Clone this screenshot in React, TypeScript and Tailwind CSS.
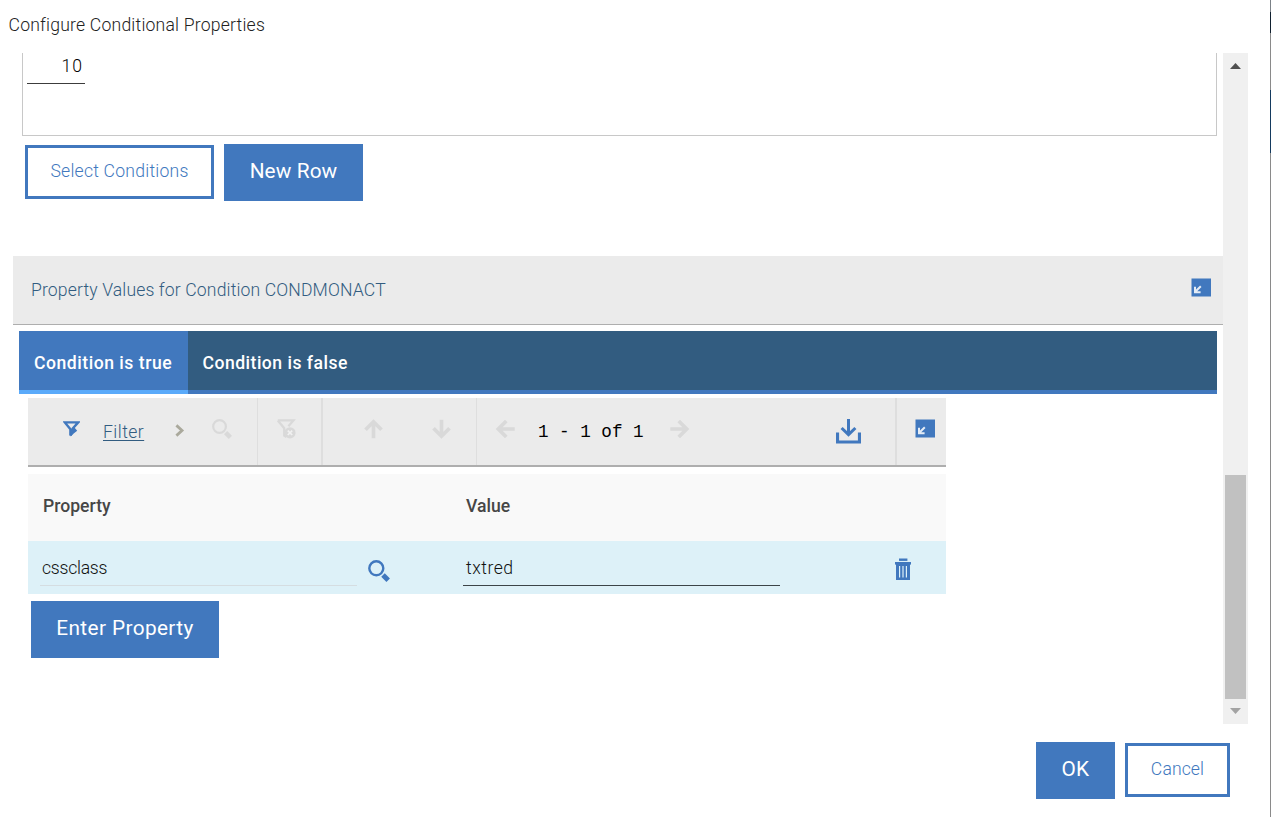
import React from "react";

type IconProps = { className?: string };

const FilterIcon = ({ className }: IconProps) => (
  <svg className={className} width="17" height="17" viewBox="0 0 17 17" fill="none">
    <path d="M1.8 1.4H15.2L9.8 7.4V10L7.4 14.5V8.2Z" stroke="#4178be" strokeWidth="2.4" />
    <path d="M11.5 6.6L14.2 9.8L11 12.2L7.6 15.6V10Z" fill="#4178be" />
  </svg>
);

const ClearFilterIcon = ({ className }: IconProps) => (
  <svg className={className} width="20" height="20" viewBox="0 0 20 20" fill="none">
    <path d="M1.8 1.4H17.4L12.4 7.2M1.8 1.4L8.2 9.2V16.6L10.5 18" stroke="#d9d9d9" strokeWidth="2.3" />
    <circle cx="14" cy="13.8" r="5.6" fill="#d9d9d9" />
    <path d="M11.8 11.6L16.2 16M16.2 11.6L11.8 16" stroke="#f1f1f1" strokeWidth="1.7" />
  </svg>
);

const SearchIcon = ({ className }: IconProps) => (
  <svg className={className} viewBox="0 0 22 22" fill="none" stroke="currentColor">
    <circle cx="8.3" cy="8.3" r="7" strokeWidth="2.4" />
    <path d="M15 15L20.2 20.2" strokeWidth="5" />
  </svg>
);

const ArrowIcon = ({ className }: IconProps) => (
  <svg className={className} width="19" height="20" viewBox="0 0 19 20" fill="none">
    <path d="M9.5 19.2V3M1.5 10.8L9.5 2.8L17.5 10.8" stroke="#d9d9d9" strokeWidth="3.7" />
  </svg>
);

const DownloadIcon = ({ className }: IconProps) => (
  <svg className={className} width="25" height="25" viewBox="0 0 25 25" fill="none" stroke="#4178be">
    <path d="M12.5 0V15.5M5.6 9L12.5 15.7L19.4 9" strokeWidth="3" />
    <path d="M1.5 13.5V23H23.5V13.5" strokeWidth="3.2" />
  </svg>
);

const CollapseIcon = ({ className }: IconProps) => (
  <svg className={className} width="20" height="19" viewBox="0 0 20 19" fill="none">
    <rect x="0.5" y="0.5" width="19.5" height="18" fill="#4178be" />
    <path d="M9.8 8.2L4.5 13.5M4 8.8V14.2H9.6" stroke="#e4ecf6" strokeWidth="2" />
  </svg>
);

const TrashIcon = ({ className }: IconProps) => (
  <svg className={className} width="16" height="23" viewBox="0 0 16 23" fill="#4178be">
    <rect x="4" y="0.5" width="8.4" height="2.4" />
    <rect x="0" y="4" width="16" height="2.6" />
    <path fillRule="evenodd" d="M1 6H15V22H1ZM4 8H5.2V19.5H4ZM7.4 8H8.6V19.5H7.4ZM10.8 8H12V19.5H10.8Z" />
  </svg>
);

const Divider = ({ className }: IconProps) => <div className={`h-full shrink-0 bg-[#dedede] ${className}`} />;

function Toolbar() {
  return (
    <div className="flex h-[69px] w-[918px] items-start border-b-2 border-[#aeaeae] bg-[#ebebeb]">
      <div className="flex h-full w-[229px] shrink-0 items-start">
        <FilterIcon className="mt-[23px] ml-[35px] shrink-0" />
        <a className="mt-[22px] ml-[23px] block w-[42px] text-[17.6px] leading-[25px] font-light tracking-[0.45px] text-[#325c80] underline decoration-1 underline-offset-[2px]">
          Filter
        </a>
        <svg className="mt-[26px] ml-[30px] shrink-0" width="10" height="13" viewBox="0 0 10 13" fill="none">
          <path d="M1.4 1.4L7 6.5L1.4 11.6" stroke="#aaa99c" strokeWidth="2.8" />
        </svg>
        <SearchIcon className="mt-[21px] ml-[27px] size-5 shrink-0 text-[#d9d9d9]" />
      </div>
      <Divider className="w-px" />
      <div className="w-[63px] shrink-0 pt-[21px] pl-[18px]">
        <ClearFilterIcon />
      </div>
      <Divider className="w-[2px]" />
      <div className="flex w-[153px] shrink-0 gap-[49px] pt-[21px] pl-[41px]">
        <ArrowIcon />
        <ArrowIcon className="rotate-180" />
      </div>
      <Divider className="w-px" />
      <div className="flex w-[418px] shrink-0 items-start pt-[21px] pl-[19px]">
        <ArrowIcon className="shrink-0 -rotate-90" />
        <span className="mt-px ml-[23px] w-[106px] font-['Liberation_Mono',monospace] text-[17.6px] leading-6 whitespace-pre text-black">
          1 - 1 of 1
        </span>
        <ArrowIcon className="ml-[26px] shrink-0 rotate-90" />
        <DownloadIcon className="ml-[147px] shrink-0" />
      </div>
      <Divider className="w-[2px]" />
      <div className="pt-[21px] pl-[18px]">
        <CollapseIcon />
      </div>
    </div>
  );
}

function PropertyTable() {
  return (
    <div className="mt-[7px] w-[918px]">
      <div className="flex h-[67px] bg-[#f9f9f9] pl-[15px] text-[17.6px] leading-[65px] font-medium text-[#464646]">
        <span className="w-[423px]">Property</span>
        <span>Value</span>
      </div>
      <div className="flex h-[53px] items-start bg-[#ddf1f8] pl-3 text-[17.6px] font-light text-[#111]">
        <div className="h-[45px] w-[317px] border-b border-[#d5dde1] pl-[2px] leading-[55px]">
          <span className="tracking-[-0.25px]">cssclass</span>
        </div>
        <SearchIcon className="mt-[19px] ml-[11px] size-[22px] text-[#4178be]" />
        <div className="ml-[73px] h-[45px] w-[317px] border-b border-[#3c4448] pl-[3px] leading-[55px]">
          <span className="tracking-[0.5px]">txtred</span>
        </div>
        <TrashIcon className="mt-[17px] ml-[115px]" />
      </div>
    </div>
  );
}

function ScrollBar() {
  return (
    <div className="flex h-[671px] w-[25px] shrink-0 flex-col items-center bg-[#f0f0f0]">
      <svg className="mt-[10px] shrink-0" width="11" height="6" viewBox="0 0 11 6">
        <path d="M5.5 0L11 6H0Z" fill="#505050" />
      </svg>
      <div className="mt-[406px] h-[224px] w-[21px] shrink-0 bg-[#c1c1c1]" />
      <svg className="mt-[9px] shrink-0" width="11" height="6" viewBox="0 0 11 6">
        <path d="M0 0H11L5.5 6Z" fill="#a3a3a3" />
      </svg>
    </div>
  );
}

export default function App() {
  return (
    <div className="flex h-[817px] w-[1271px] overflow-hidden bg-white font-[Roboto,sans-serif] whitespace-nowrap">
      <main className="flex w-[1270px] shrink-0 flex-col">
        <h1 className="h-[53px] shrink-0 pl-[8.5px] text-[17.6px] leading-[50px] font-light tracking-[0.2px] text-[#222]">
          Configure Conditional Properties
        </h1>

        <div className="flex h-[671px] shrink-0">
          <div className="w-[1223px] shrink-0">
            <div className="ml-[22px] h-[83px] w-[1195px] border border-t-0 border-[#c8c8c8] pl-1">
              <div className="h-[31px] w-[58px] border-b border-[#3c3c3c] pr-[2px] text-right text-[17.6px] leading-[26px] font-light tracking-[1px] text-black">
                10
              </div>
            </div>
            <div className="mt-2 flex items-start gap-[10px] pl-[25px]">
              <button className="mt-px h-[54px] w-[189px] border-[3px] border-[#4178be] pb-[1px] text-[17.6px] font-light text-[#4178be]">
                <span className="tracking-[0.22px]">Select Conditions</span>
              </button>
              <button className="h-[57px] w-[139px] bg-[#4178be] pb-[2px] text-[20.8px] text-white">
                <span className="tracking-[0.1px]">New Row</span>
              </button>
            </div>

            <section className="mt-[55px]">
              <div className="ml-[13px] flex h-[69px] w-[1210px] items-start justify-between border-b border-[#aeaeae] bg-[#ebebeb] pr-3 pl-[18px]">
                <h2 className="text-[17.6px] leading-[69px] font-light tracking-[0.13px] text-[#325c80]">
                  Property Values for Condition CONDMONACT
                </h2>
                <CollapseIcon className="mt-[22px]" />
              </div>

              <div className="mt-[6px] ml-[19px] flex h-[63px] w-[1198px] bg-[#325c80] text-[17.6px] leading-[65px] font-medium text-white">
                <div className="w-[169px] border-b-4 border-[#5aaafa] bg-[#4178be] pl-[15px]">
                  <span className="tracking-[0.52px]">Condition is true</span>
                </div>
                <div className="grow border-b-4 border-[#4178be] pl-[14.5px]">
                  <span className="tracking-[0.48px]">Condition is false</span>
                </div>
              </div>

              <div className="mt-1 pl-7">
                <Toolbar />
                <PropertyTable />
                <button className="mt-[7px] ml-[3px] h-[57px] w-[188px] bg-[#4178be] pb-[2px] text-[20.8px] text-white">
                  <span className="tracking-[0.38px]">Enter Property</span>
                </button>
              </div>
            </section>
          </div>
          <ScrollBar />
        </div>

        <footer className="mt-[18px] flex items-start justify-end gap-[10px] pr-10">
          <button className="h-[57px] w-[79px] bg-[#4178be] pb-[2px] text-[20.8px] text-white">
            <span className="tracking-[0.2px]">OK</span>
          </button>
          <button className="mt-px h-[54px] w-[105px] border-[3px] border-[#4178be] pb-[1px] text-[17.6px] font-light text-[#4178be]">
            <span className="tracking-[0.1px]">Cancel</span>
          </button>
        </footer>
      </main>
      <div className="flex w-px shrink-0 flex-col bg-[#8a8a8a]">
        <div className="h-[12px] bg-[#7b8187]" />
        <div className="h-[21px] bg-[#10202f]" />
        <div className="h-[57px] bg-[#8a8a8a]" />
        <div className="h-[63px] bg-[#143a5f]" />
      </div>
    </div>
  );
}
